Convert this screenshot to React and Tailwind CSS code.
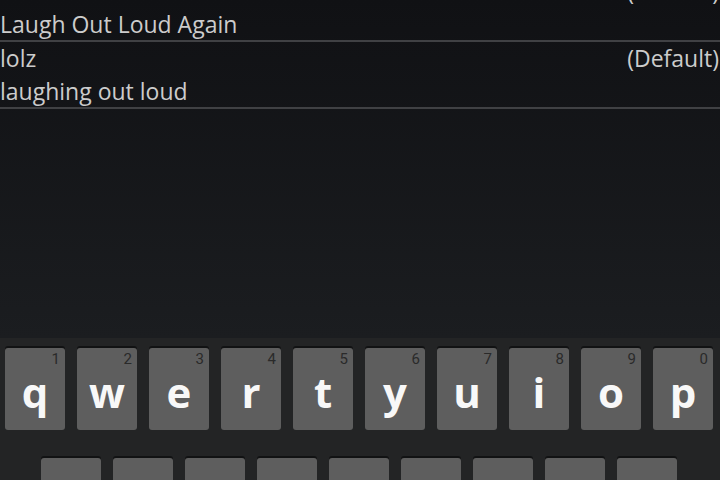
const entries = [
	{ word: "lol", shortcut: "Laugh Out Loud Again", locale: "(Default)" },
	{ word: "lolz", shortcut: "laughing out loud", locale: "(Default)" },
]

const topRow = [
	["q", "1"], ["w", "2"], ["e", "3"], ["r", "4"], ["t", "5"],
	["y", "6"], ["u", "7"], ["i", "8"], ["o", "9"], ["p", "0"],
]

const midRow = ["a", "s", "d", "f", "g", "h", "j", "k", "l"]

const Key = ({ label, hint }) => {
	return (
		<div className="relative w-[60px] h-[82px] shrink-0 rounded-[3px] bg-[#5e5e5e] shadow-[0_-2px_0_#111213] flex items-center justify-center pt-[6px]">
			{hint && (
				<span className="absolute top-[4px] right-[5px] text-[15px] leading-none text-[#2a2a2a] font-['Roboto',sans-serif]">
					{hint}
				</span>
			)}
			<span className="text-[42px] font-bold leading-none text-[#f8f8f8]">{label}</span>
		</div>
	)
}

const App = () => {
	return (
		<div className="w-[720px] h-[480px] overflow-hidden flex flex-col font-['Open_Sans','Liberation_Sans',sans-serif]">

			{/* dictionary list */}
			<div className="flex-1 overflow-hidden bg-linear-to-b from-[#101114] to-[#1b1d20]">
				<div className="-mt-[25px] flex flex-col text-[23px] font-medium text-[#cccccc]">
					{entries.map((e) => (
						<div key={e.word}>
							<div className="h-[33px] leading-[33px] flex justify-between pr-[1px]">
								<span>{e.word}</span>
								<span>{e.locale}</span>
							</div>
							<div className="h-[32px] leading-[33px]">{e.shortcut}</div>
							<div className="h-[2px] bg-[#404144]" />
						</div>
					))}
				</div>
			</div>

			{/* keyboard */}
			<div className="h-[142px] bg-[#232425] pt-[10px] flex flex-col gap-[28px]">
				<div className="flex gap-[12px] pl-[5px]">
					{topRow.map(([l, n]) => (
						<Key key={l} label={l} hint={n} />
					))}
				</div>
				<div className="flex gap-[12px] pl-[41px]">
					{midRow.map((l) => (
						<Key key={l} label={l} />
					))}
				</div>
			</div>
		</div>
	)
}

export default App
